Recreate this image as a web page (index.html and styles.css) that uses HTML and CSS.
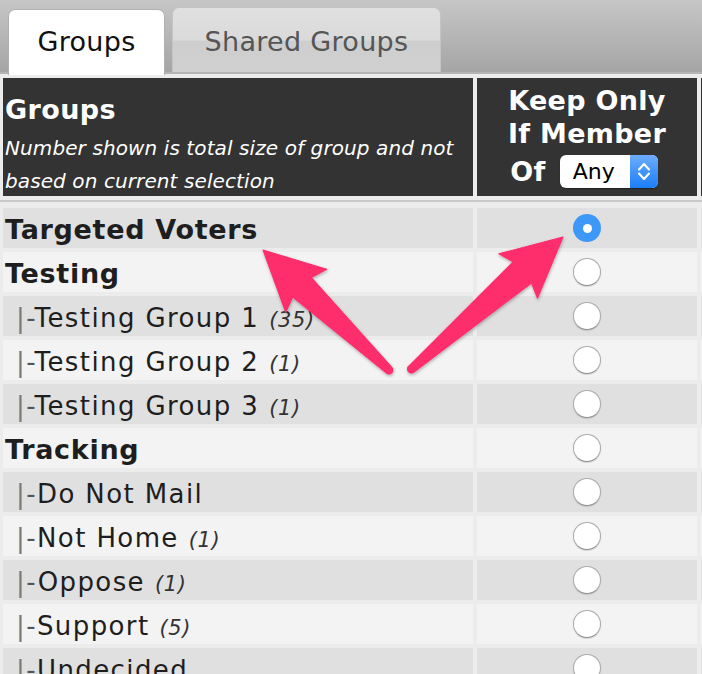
FILE: index.html
```html
<!DOCTYPE html>
<html>
<head>
<meta charset="utf-8">
<link rel="stylesheet" href="styles.css">
</head>
<body>
<div class="page">
  <div class="tabbar">
    <div class="tab tab-active">Groups</div>
    <div class="tab tab-inactive">Shared Groups</div>
  </div>
  <div class="panel">
    <div class="grid head">
      <div class="hcell hleft">
        <div class="htitle">Groups</div>
        <div class="hsub">Number shown is total size of group and not<br>based on current selection</div>
      </div>
      <div class="hcell hright">
        <div class="hline">Keep Only</div>
        <div class="hline">If Member</div>
        <div class="hline hline-of">
          <span>Of</span>
          <span class="select"><span class="select-text">Any</span><span class="stepper"><svg width="28" height="33" viewBox="0 0 28 33"><polyline points="9,14.5 14,9 19,14.5" fill="none" stroke="#fff" stroke-width="2" stroke-linecap="round" stroke-linejoin="round"/><polyline points="9,18.5 14,24 19,18.5" fill="none" stroke="#fff" stroke-width="2" stroke-linecap="round" stroke-linejoin="round"/></svg></span></span>
        </div>
      </div>
      <div class="hcell"></div>
    </div>
    <div class="sep"></div>
    <div class="grid rows">
      <div class="cell name bold dark">Targeted Voters</div>
      <div class="cell radio-cell dark"><span class="radio radio-on"></span></div>
      <div class="cell dark"></div>

      <div class="cell name bold light">Testing</div>
      <div class="cell radio-cell light"><span class="radio"></span></div>
      <div class="cell light"></div>

      <div class="cell name sub dark"><span class="pipe">|</span><span class="dash">-</span>Testing Group 1<span class="count">(35)</span></div>
      <div class="cell radio-cell dark"><span class="radio"></span></div>
      <div class="cell dark"></div>

      <div class="cell name sub light"><span class="pipe">|</span><span class="dash">-</span>Testing Group 2<span class="count">(1)</span></div>
      <div class="cell radio-cell light"><span class="radio"></span></div>
      <div class="cell light"></div>

      <div class="cell name sub dark"><span class="pipe">|</span><span class="dash">-</span>Testing Group 3<span class="count">(1)</span></div>
      <div class="cell radio-cell dark"><span class="radio"></span></div>
      <div class="cell dark"></div>

      <div class="cell name bold light">Tracking</div>
      <div class="cell radio-cell light"><span class="radio"></span></div>
      <div class="cell light"></div>

      <div class="cell name sub dark"><span class="pipe">|</span><span class="dash">-</span>Do Not Mail</div>
      <div class="cell radio-cell dark"><span class="radio"></span></div>
      <div class="cell dark"></div>

      <div class="cell name sub light"><span class="pipe">|</span><span class="dash">-</span>Not Home<span class="count">(1)</span></div>
      <div class="cell radio-cell light"><span class="radio"></span></div>
      <div class="cell light"></div>

      <div class="cell name sub dark"><span class="pipe">|</span><span class="dash">-</span>Oppose<span class="count">(1)</span></div>
      <div class="cell radio-cell dark"><span class="radio"></span></div>
      <div class="cell dark"></div>

      <div class="cell name sub light"><span class="pipe">|</span><span class="dash">-</span>Support<span class="count">(5)</span></div>
      <div class="cell radio-cell light"><span class="radio"></span></div>
      <div class="cell light"></div>

      <div class="cell name sub dark"><span class="pipe">|</span><span class="dash">-</span>Undecided</div>
      <div class="cell radio-cell dark"><span class="radio"></span></div>
      <div class="cell dark"></div>
    </div>
  </div>
  <svg class="arrows" width="702" height="674" viewBox="0 0 702 674">
    <defs>
      <filter id="sh" x="-20%" y="-20%" width="140%" height="140%">
        <feDropShadow dx="0.5" dy="1.5" stdDeviation="1.5" flood-color="#000" flood-opacity="0.3"/>
      </filter>
    </defs>
    <g filter="url(#sh)" fill="#fe2d6c" stroke="#fe2d6c" stroke-width="1" stroke-linejoin="round">
      <path transform="translate(263 250) rotate(43.64)" d="M0 0 L59.5 -30 L54 -13.5 L174 -4 A4 4 0 0 1 174 4 L54 13.5 L59.5 29.5 Z"/>
      <path transform="translate(563 237) rotate(138.95)" d="M0 0 L59.5 -29.5 L54 -14 L201 -4 A4 4 0 0 1 201 4 L54 14 L59.5 29.5 Z"/>
    </g>
  </svg>
</div>
</body>
</html>
```

FILE: styles.css
```css
html, body {
  margin: 0;
  padding: 0;
  background: #ececec;
}
body {
  width: 702px;
  height: 674px;
  overflow: hidden;
  font-family: "DejaVu Sans", Verdana, sans-serif;
}
.page {
  position: relative;
  width: 702px;
  height: 674px;
  overflow: hidden;
}
.tabbar {
  height: 74px;
  box-sizing: border-box;
  display: flex;
  align-items: flex-end;
  gap: 7px;
  padding-left: 8px;
  background: linear-gradient(#c6c6c6, #a4a4a4);
  box-shadow: inset 0 -2px 0 #b4b4b4;
}
.tab {
  box-sizing: border-box;
  display: flex;
  align-items: center;
  justify-content: center;
  font-size: 27px;
  letter-spacing: 0.3px;
  border-radius: 7px 7px 0 0;
}
.tab-active {
  width: 157px;
  height: 66px;
  margin-bottom: -1px;
  padding-bottom: 2px;
  background: #ffffff;
  color: #111;
  border: 1px solid #b0b0b0;
  border-bottom: none;
}
.tab-inactive {
  width: 269px;
  height: 65px;
  margin-bottom: 2px;
  padding-top: 3px;
  color: #555;
  background: linear-gradient(#e0e0e0 0%, #dadada 50%, #cecece 52%, #d0d0d0 100%);
  border: 1px solid #c4c4c4;
  border-bottom: none;
}
.panel {
  padding-top: 4px;
  background: #ececec;
}
.grid {
  display: grid;
  grid-template-columns: 470px 220px 100px;
  column-gap: 4px;
  margin-left: 3px;
}
.head .hcell {
  height: 118px;
  background: #333333;
  color: #ffffff;
  box-sizing: border-box;
}
.hleft {
  padding: 13px 0 0 2px;
}
.htitle {
  font-size: 27px;
  font-weight: bold;
  letter-spacing: 0.4px;
  line-height: 38px;
}
.hsub {
  margin-top: 3px;
  font-size: 20px;
  font-style: italic;
  letter-spacing: 0.1px;
  line-height: 33px;
}
.hright {
  padding-top: 6px;
  text-align: center;
}
.hline {
  font-size: 27px;
  font-weight: bold;
  letter-spacing: 0.3px;
  line-height: 33px;
}
.hline-of {
  margin-top: 5px;
  margin-right: 6px;
  height: 33px;
  display: flex;
  justify-content: center;
  align-items: center;
  gap: 14px;
}
.select {
  display: inline-flex;
  width: 98px;
  height: 33px;
  border-radius: 6px;
  background: #ffffff;
  overflow: hidden;
  box-shadow: 0 1px 1px rgba(0, 0, 0, 0.35);
}
.select-text {
  flex: 1;
  text-align: left;
  padding-left: 13px;
  font-size: 22px;
  font-weight: normal;
  letter-spacing: 0;
  color: #000;
  line-height: 34px;
}
.stepper {
  width: 28px;
  height: 33px;
  background: linear-gradient(#6dadfc, #1b7ef8);
  display: flex;
}
.sep {
  margin: 4px 0 6px;
  height: 2px;
  background: #c9c9c9;
}
.rows {
  row-gap: 4px;
}
.cell {
  height: 40px;
  box-sizing: border-box;
}
.dark {
  background: #e0e0e0;
}
.light {
  background: #f3f3f3;
}
.name {
  padding: 2px 0 0 2px;
  line-height: 40px;
  color: #1e1e1e;
  white-space: nowrap;
}
.bold {
  font-size: 27px;
  font-weight: bold;
  letter-spacing: 0.7px;
}
.sub {
  font-size: 26px;
  letter-spacing: 1.4px;
  padding-left: 13px;
}
.pipe {
  color: #7a7a7a;
  margin-right: 0;
}
.dash {
  color: #555;
  margin-right: 0;
}
.count {
  font-size: 21px;
  font-style: italic;
  color: #333;
  letter-spacing: 0.6px;
  margin-left: 10px;
}
.radio-cell {
  display: flex;
  align-items: center;
  justify-content: center;
}
.radio {
  width: 28px;
  height: 28px;
  box-sizing: border-box;
  border-radius: 50%;
  background: #ffffff;
  border: 1px solid #ababab;
  border-bottom-color: #8e8e8e;
  box-shadow: 0 1px 1px rgba(0, 0, 0, 0.12);
}
.radio-on {
  background: #3e98f8;
  border: none;
  box-shadow: none;
  display: flex;
  align-items: center;
  justify-content: center;
}
.radio-on::after {
  content: "";
  width: 9px;
  height: 9px;
  border-radius: 50%;
  background: #ffffff;
}
.arrows {
  position: absolute;
  left: 0;
  top: 0;
  pointer-events: none;
}
```
